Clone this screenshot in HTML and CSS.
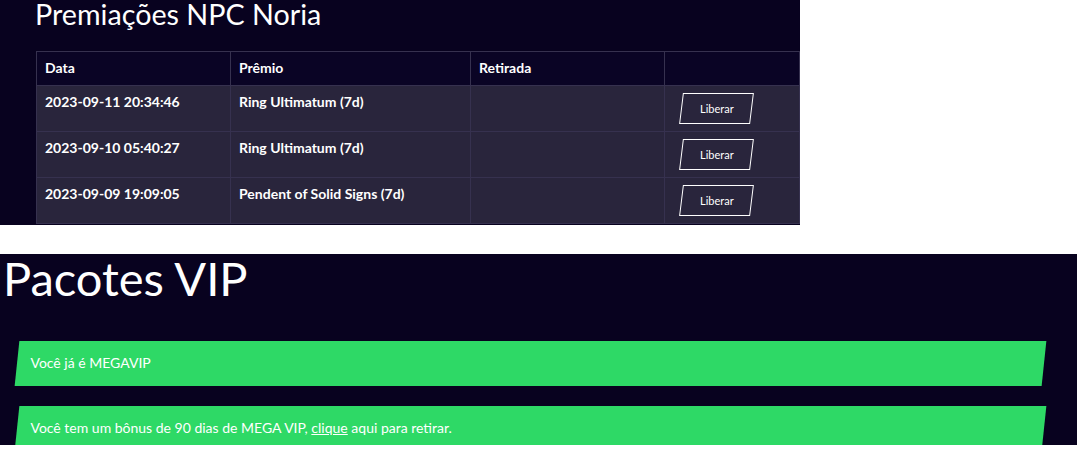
FILE: index.html
```html
<!DOCTYPE html>
<html lang="pt-BR">
<head>
<meta charset="utf-8">
<title>Premiações</title>
<link rel="stylesheet" href="styles.css">
</head>
<body>
<section class="panel panel-awards">
  <h2 class="awards-title">Premiações NPC Noria</h2>
  <table class="awards-table">
    <colgroup>
      <col class="c1"><col class="c2"><col class="c3"><col class="c4">
    </colgroup>
    <thead>
      <tr><th>Data</th><th>Prêmio</th><th>Retirada</th><th></th></tr>
    </thead>
    <tbody>
      <tr><td>2023-09-11 20:34:46</td><td>Ring Ultimatum (7d)</td><td></td><td><button class="btn-release"><span>Liberar</span></button></td></tr>
      <tr><td>2023-09-10 05:40:27</td><td>Ring Ultimatum (7d)</td><td></td><td><button class="btn-release"><span>Liberar</span></button></td></tr>
      <tr><td>2023-09-09 19:09:05</td><td>Pendent of Solid Signs (7d)</td><td></td><td><button class="btn-release"><span>Liberar</span></button></td></tr>
    </tbody>
  </table>
</section>
<section class="panel panel-vip">
  <h1 class="vip-title">Pacotes VIP</h1>
  <div class="vip-list">
    <div class="vip-bar"><span class="vip-text">Você já é MEGAVIP</span></div>
    <div class="vip-bar"><span class="vip-text">Você tem um bônus de 90 dias de MEGA VIP, <a class="vip-link" href="#">clique</a> aqui para retirar.</span></div>
  </div>
</section>
</body>
</html>
```
FILE: styles.css
```css
html, body {
  margin: 0;
  padding: 0;
  background: #ffffff;
  font-family: Lato, "Open Sans", sans-serif;
  color: #ffffff;
}

.panel {
  background: #08021f;
  overflow: hidden;
}

.panel-awards {
  width: 800px;
  height: 225px;
}

.awards-title {
  margin: 0 0 22px 35px;
  font-size: 28.7px;
  line-height: 29px;
  font-weight: 400;
}

.awards-table {
  margin-left: 36px;
  width: 763px;
  border-collapse: collapse;
  table-layout: fixed;
  font-size: 14px;
  font-weight: 700;
}

.c1 { width: 194px; }
.c2 { width: 240px; }
.c3 { width: 194px; }
.c4 { width: 135px; }

.awards-table th,
.awards-table td {
  border: 1px solid #36314f;
  text-align: left;
  vertical-align: top;
  padding: 0 8px;
  line-height: 20px;
  box-sizing: border-box;
}

.awards-table th {
  height: 34px;
  vertical-align: middle;
  padding-bottom: 2px;
  background: #0a0425;
}

.awards-table td {
  height: 46px;
  padding-top: 6px;
  padding-bottom: 0;
  background: #29253c;
}

.btn-release {
  display: flex;
  align-items: center;
  justify-content: center;
  margin: 1px 0 0 8px;
  width: 71px;
  height: 31px;
  padding: 0;
  border: 1px solid #ffffff;
  background: transparent;
  color: #ffffff;
  font-family: Lato, sans-serif;
  font-size: 11px;
  transform: skewX(-7deg);
}

.btn-release span {
  transform: skewX(7deg);
}

.panel-vip {
  margin-top: 29px;
  width: 1077px;
  height: 191px;
}

.vip-title {
  margin: 1px 0 0 3px;
  font-size: 47px;
  line-height: 47px;
  font-weight: 400;
}

.vip-list {
  display: flex;
  flex-direction: column;
  gap: 20px;
  margin-top: 39px;
}

.vip-bar {
  display: flex;
  align-items: center;
  margin-left: 16.5px;
  width: 1027px;
  height: 45px;
  background: #2ed966;
  transform: skewX(-6deg);
}

.vip-text {
  padding: 0 0 3px 13.5px;
  font-size: 14px;
  transform: skewX(6deg);
}

.vip-link {
  color: #ffffff;
  text-decoration: underline;
}
```
